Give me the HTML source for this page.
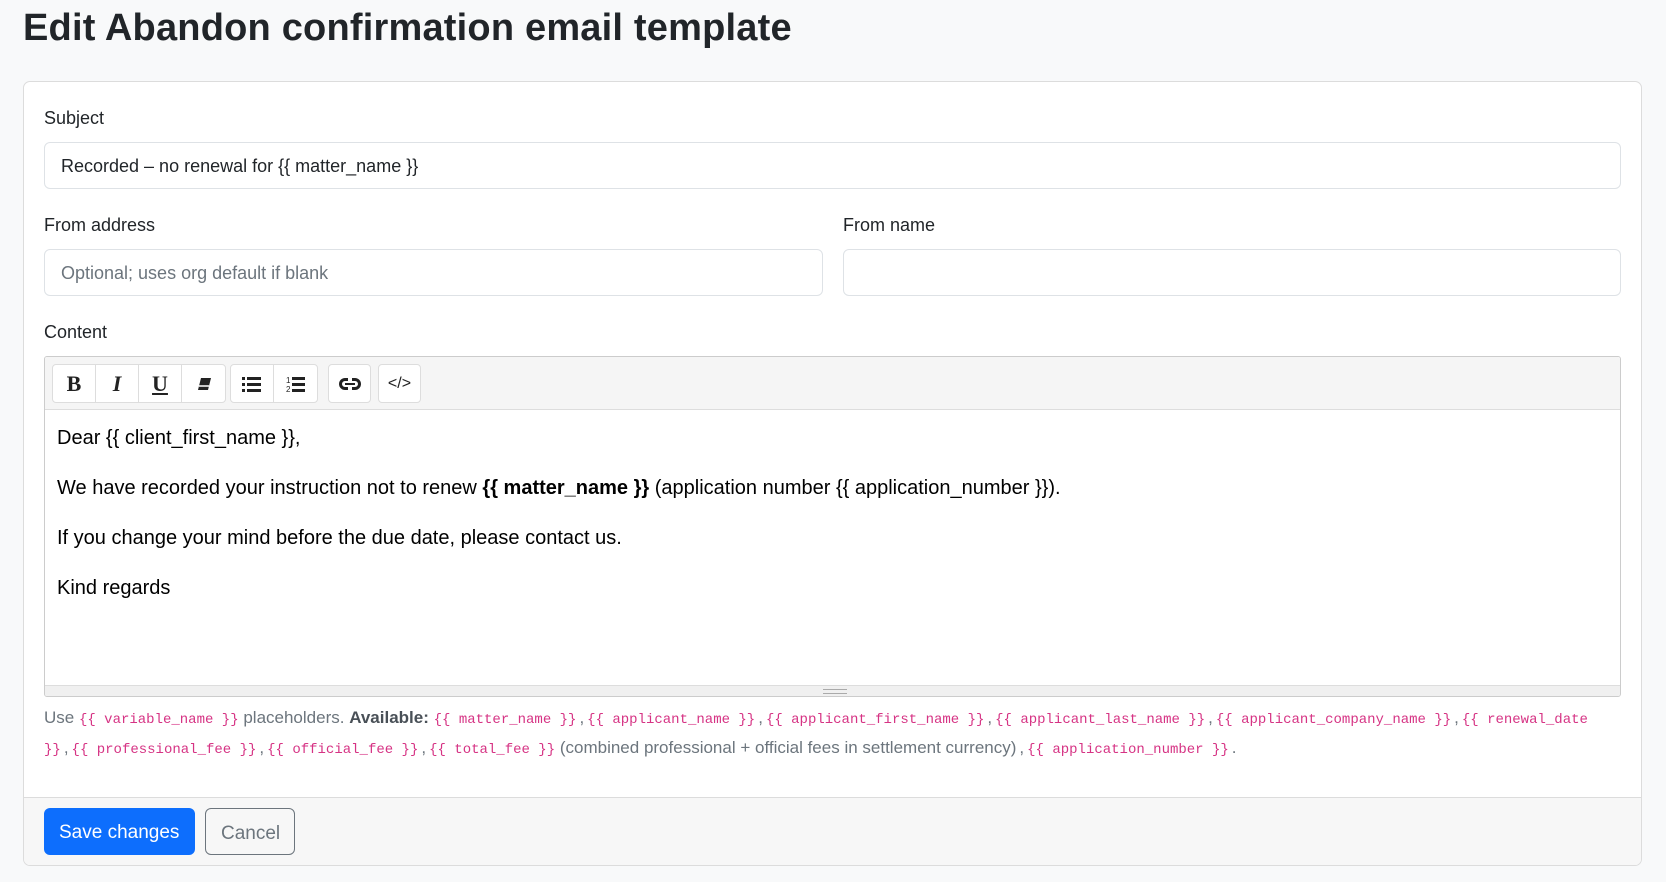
<!DOCTYPE html>
<html><head><meta charset="utf-8"><style>
*{box-sizing:border-box;margin:0;padding:0}
body{width:1666px;height:882px;background:#f8f9fa;font-family:"Liberation Sans",Arial,sans-serif;color:#212529;overflow:hidden;position:relative}
h1{position:absolute;left:23px;top:7px;font-size:38px;font-weight:bold;letter-spacing:0.2px;color:#212529}
.card{position:absolute;left:23px;top:81px;width:1619px;height:785px;background:#fff;border:1px solid #dcdcdc;border-radius:7px;overflow:hidden}
.lbl{position:absolute;font-size:18px;color:#212529}
.inp{position:absolute;height:47px;border:1px solid #dee2e6;border-radius:6px;background:#fff;font-size:18px;padding:13px 16px 11px;color:#212529}
.ph{color:#6c757d}
.ed{position:absolute;left:20px;top:274px;width:1577px;height:341px;border:1px solid #ccc;border-radius:3px;overflow:hidden}
.tb{height:53px;background:#f5f5f5;border-bottom:1px solid #ddd;position:relative}
.grp{position:absolute;top:7px;height:39px;display:flex;border:1px solid #ddd;border-radius:4px;background:#fff;overflow:hidden}
.grp div{width:43px;height:37px;border-right:1px solid #ddd;display:flex;align-items:center;justify-content:center;font-family:"Liberation Serif",serif;font-size:22px;color:#222}
.grp div:last-child{border-right:none}
.body{padding:16px 12px;font-family:"Liberation Sans",Arial,sans-serif;font-size:20px;color:#000}
.body p{height:50px;line-height:24px}
.rs{position:absolute;left:0;bottom:0;width:100%;height:11px;background:#f0f0f0;border-top:1px solid #ddd}
.rs:after{content:"";position:absolute;left:778px;top:3px;width:24px;height:3px;border-top:1px solid #aaa;border-bottom:1px solid #aaa}
.help{position:absolute;left:20px;top:622px;width:1556px;font-size:17px;color:#6c757d;line-height:27px;word-spacing:0}
code{font-family:"Liberation Mono",monospace;font-size:14px;color:#d63384}
.c{margin:0 3px}
.foot{position:absolute;left:0;top:715px;width:100%;height:70px;background:#f7f7f7;border-top:1px solid #dcdcdc}
.btn{position:absolute;top:10px;height:47px;border-radius:6px;font-size:19px;padding:14px 15px 8px}
</style></head><body>
<h1>Edit Abandon confirmation email template</h1>
<div class="card">
<div class="lbl" style="left:20px;top:26px">Subject</div>
<div class="inp" style="left:20px;top:60px;width:1577px">Recorded – no renewal for {{ matter_name }}</div>
<div class="lbl" style="left:20px;top:133px">From address</div>
<div class="inp ph" style="left:20px;top:167px;width:779px">Optional; uses org default if blank</div>
<div class="lbl" style="left:819px;top:133px">From name</div>
<div class="inp" style="left:819px;top:167px;width:778px"></div>
<div class="lbl" style="left:20px;top:240px">Content</div>
<div class="ed">
<div class="tb">
<div class="grp" style="left:7px"><div style="font-weight:bold">B</div><div style="font-style:italic;font-weight:bold">I</div><div style="text-decoration:underline;font-weight:bold">U</div><div><svg width="16" height="14" viewBox="0 0 16 14"><path d="M5 1h10l-3 12H2z" fill="#222"/><path d="M3 9h10" stroke="#fff" stroke-width="1.5"/></svg></div></div>
<div class="grp" style="left:185px"><div><svg width="20" height="16" viewBox="0 0 20 16"><g fill="#222"><rect x="0" y="1" width="3" height="3"/><rect x="0" y="7" width="3" height="3"/><rect x="0" y="13" width="3" height="3"/><rect x="5" y="1" width="14" height="3"/><rect x="5" y="7" width="14" height="3"/><rect x="5" y="13" width="14" height="3"/></g></svg></div><div><svg width="20" height="18" viewBox="0 0 20 18"><text x="0" y="8" font-size="8" font-family="Liberation Sans" fill="#222">1</text><text x="0" y="17" font-size="8" font-family="Liberation Sans" fill="#222">2</text><g fill="#222"><rect x="6" y="2" width="13" height="3"/><rect x="6" y="8" width="13" height="3"/><rect x="6" y="14" width="13" height="3"/></g></svg></div></div>
<div class="grp" style="left:283px"><div style="width:41px"><svg width="22" height="12" viewBox="0 0 22 12"><rect x="1.5" y="1.5" width="19" height="9" rx="4.5" fill="none" stroke="#222" stroke-width="3"/><rect x="6" y="5" width="10" height="2" fill="#222"/><rect x="9" y="0" width="4" height="3" fill="#fff"/><rect x="9" y="9" width="4" height="3" fill="#fff"/></svg></div></div>
<div class="grp" style="left:333px"><div style="width:41px;font-family:'Liberation Sans',sans-serif;font-size:16px">&lt;/&gt;</div></div>
</div>
<div class="body">
<p>Dear {{ client_first_name }},</p>
<p>We have recorded your instruction not to renew <b>{{ matter_name }}</b> (application number {{ application_number }}).</p>
<p>If you change your mind before the due date, please contact us.</p>
<p>Kind regards</p>
</div>
<div class="rs"></div>
</div>
<div class="help">Use <code>{{ variable_name }}</code> placeholders. <b style="color:#495057">Available:</b> <code>{{ matter_name }}</code><span class="c">,</span><code>{{ applicant_name }}</code><span class="c">,</span><code>{{ applicant_first_name }}</code><span class="c">,</span><code>{{ applicant_last_name }}</code><span class="c">,</span><code>{{ applicant_company_name }}</code><span class="c">,</span><code>{{ renewal_date }}</code><span class="c">,</span><code>{{ professional_fee }}</code><span class="c">,</span><code>{{ official_fee }}</code><span class="c">,</span><code>{{ total_fee }}</code> (combined professional + official fees in settlement currency)<span class="c">,</span><code>{{ application_number }}</code><span class="c">.</span></div>
<div class="foot">
<div class="btn" style="left:20px;width:151px;background:#0d6efd;color:#fff">Save changes</div>
<div class="btn" style="left:181px;width:90px;border:1px solid #6c757d;color:#6c757d">Cancel</div>
</div>
</div>
</body></html>
